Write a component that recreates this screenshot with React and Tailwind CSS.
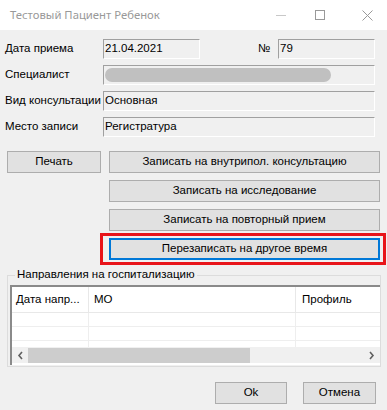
import React from "react";

const F = { fontFamily: '"Liberation Sans", Arial, sans-serif' };

function Box({ className = "", children }) {
  return (
    <div
      className={
        "h-[20px] border-t border-l border-t-[#a0a0a0] border-l-[#a0a0a0] border-b border-r border-b-white border-r-white bg-[#f0f0f0] flex items-center pl-[1px] text-[11.5px] text-black leading-none whitespace-nowrap " +
        className
      }
    >
      {children}
    </div>
  );
}

function Btn({ className = "", focus = false, children }) {
  return (
    <div
      className={
        (focus ? "border-2 border-[#0078d7] " : "border border-[#adadad] ") +
        "h-[22px] bg-[#e1e1e1] flex items-center justify-center text-[11.5px] text-black leading-none whitespace-nowrap " +
        className
      }
    >
      {children}
    </div>
  );
}

function Row({ label, children }) {
  return (
    <div className="flex items-center h-[20px]">
      <div className="w-[103px] pl-[5px] text-[11.5px] text-black leading-none whitespace-nowrap">{label}</div>
      {children}
    </div>
  );
}

export default function App() {
  return (
    <div className="w-[387px] h-[410px] bg-[#f0f0f0] overflow-hidden" style={F}>
      {/* title bar */}
      <div className="h-[30px] bg-white flex items-center relative">
        <div
          className="pl-[10px] text-[11.3px] text-[#999999] whitespace-nowrap"
          style={{ fontFamily: '"Noto Sans", "Open Sans", sans-serif' }}
        >
          Тестовый Пациент Ребенок
        </div>
        <div className="absolute left-[276px] top-[15px] w-[10px] h-px bg-[#c8c8c8]" />
        <div className="absolute left-[315px] top-[10px] w-[10px] h-[10px] border border-[#999999]" />
        <svg className="absolute left-[362px] top-[10px]" width="11" height="11" viewBox="0 0 11 11">
          <path d="M0.5 0.5L10.5 10.5M10.5 0.5L0.5 10.5" stroke="#999999" strokeWidth="1" />
        </svg>
      </div>

      {/* fields */}
      <div className="pt-[9px] flex flex-col gap-[6px]">
        <Row label="Дата приема">
          <Box className="w-[97px]">21.04.2021</Box>
          <div className="ml-[58px] w-[20px] text-[11.5px] text-black leading-none">№</div>
          <Box className="w-[97px]">79</Box>
        </Row>
        <Row label="Специалист">
          <Box className="w-[272px]">
            <div className="h-[14px] w-[226px] rounded-full bg-[#c0c0c0]" />
          </Box>
        </Row>
        <Row label="Вид консультации">
          <Box className="w-[272px]">Основная</Box>
        </Row>
        <Row label="Место записи">
          <Box className="w-[272px]">Регистратура</Box>
        </Row>
      </div>

      {/* buttons */}
      <div className="mt-[14px] flex">
        <div className="pl-[7px] w-[109px]">
          <Btn className="w-[94px]">Печать</Btn>
        </div>
        <div className="flex flex-col gap-[7px] w-[271px]">
          <Btn>Записать на внутрипол. консультацию</Btn>
          <Btn>Записать на исследование</Btn>
          <Btn>Записать на повторный прием</Btn>
          <div className="relative">
            <Btn focus>Перезаписать на другое время</Btn>
            <div className="absolute left-[-9px] right-[-6px] top-[-5px] bottom-[-5px] border-[3px] border-[#e8141a]" />
          </div>
        </div>
      </div>

      {/* group box */}
      <div className="relative mt-[15px] mx-[7px] w-[374px] h-[92px] border border-[#dcdcdc]">
        <div className="absolute left-[7px] top-[-7px] px-[2px] bg-[#f0f0f0] text-[11.5px] text-black leading-none whitespace-nowrap">
          Направления на госпитализацию
        </div>
        <div className="absolute left-[2px] top-[9px] w-[370px] h-[80px] border-t-2 border-l-2 border-[#8a8a8a] bg-white flex flex-col">
          <div className="h-[26px] flex border-b border-[#e8e8e8] text-[11.5px] text-black">
            <div className="w-[77px] border-r border-[#e8e8e8] flex items-center pl-[4px] whitespace-nowrap">Дата напр...</div>
            <div className="w-[207px] border-r border-[#e8e8e8] flex items-center pl-[5px]">МО</div>
            <div className="flex-1 flex items-center pl-[6px]">Профиль</div>
          </div>
          <div className="h-[14px] flex border-b border-[#eeeeee]">
            <div className="w-[77px] border-r border-[#eeeeee]" />
            <div className="w-[207px] border-r border-[#eeeeee]" />
          </div>
          <div className="h-[14px] flex border-b border-[#eeeeee]">
            <div className="w-[77px] border-r border-[#eeeeee]" />
            <div className="w-[207px] border-r border-[#eeeeee]" />
          </div>
          <div className="h-[6px] flex">
            <div className="w-[77px] border-r border-[#eeeeee]" />
            <div className="w-[207px] border-r border-[#eeeeee]" />
          </div>
          <div className="h-[16px] bg-[#f0f0f0] flex items-center">
            <svg className="ml-[5px]" width="7" height="9" viewBox="0 0 7 9">
              <path d="M5 1L2 4.5L5 8" stroke="#606060" strokeWidth="1.6" fill="none" />
            </svg>
            <div className="ml-[4px] w-[222px] h-[15px] bg-[#cdcdcd]" />
            <div className="flex-1" />
            <svg className="mr-[5px]" width="7" height="9" viewBox="0 0 7 9">
              <path d="M2 1L5 4.5L2 8" stroke="#606060" strokeWidth="1.6" fill="none" />
            </svg>
          </div>
        </div>
      </div>

      {/* ok / cancel */}
      <div className="mt-[15px] flex">
        <Btn className="ml-[215px] w-[72px] h-[21px]">Ok</Btn>
        <Btn className="ml-[16px] w-[73px] h-[21px]">Отмена</Btn>
      </div>
    </div>
  );
}
